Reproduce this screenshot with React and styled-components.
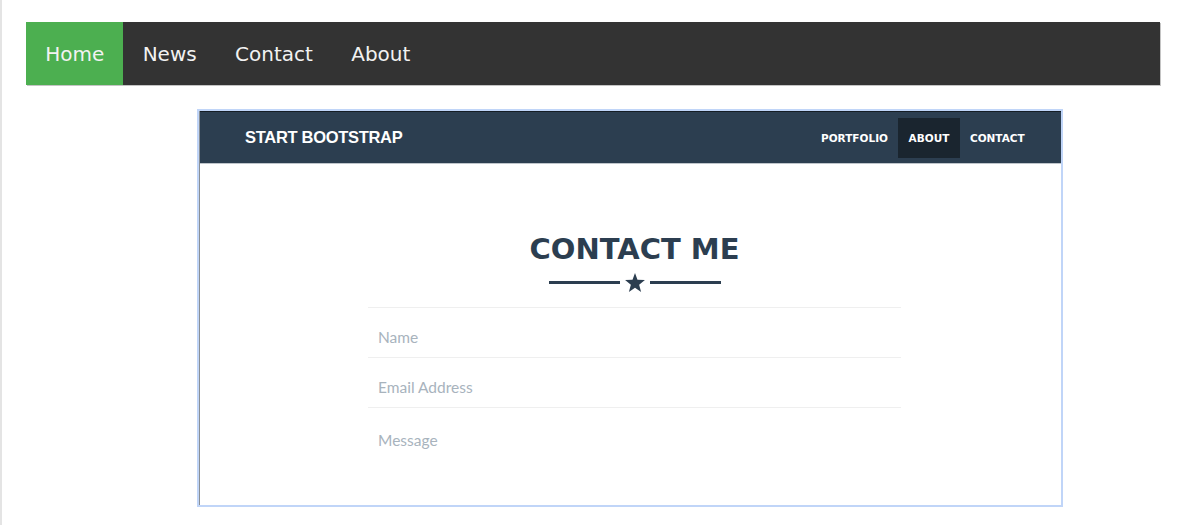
import React from "react";
import styled, { createGlobalStyle } from "styled-components";

const GlobalStyle = createGlobalStyle`
  html, body { margin: 0; padding: 0; background: #ffffff; }
  body { font-family: "DejaVu Sans", Verdana, sans-serif; }
  * { box-sizing: border-box; }
`;

const Page = styled.div`
  min-height: 525px;
  border-left: 2px solid #e4e4e4;
  padding-top: 22px;
`;

const TopNav = styled.nav`
  margin-left: 24px;
  width: 1134px;
  height: 63px;
  background: #333333;
  display: flex;
  box-shadow: 1px 1px 0 #c4c4c4;
`;

const TopLink = styled.a`
  display: flex;
  align-items: center;
  padding: 0 19.2px;
  font-family: "DejaVu Sans", Verdana, sans-serif;
  font-size: 20px;
  color: #f2f2f2;
  text-decoration: none;
  background: ${(p) => (p.$active ? "#4caf50" : "transparent")};
`;

const Frame = styled.div`
  margin: 24px 0 0 195px;
  width: 866px;
  height: 398px;
  border: 2px solid #c0d5f8;
`;

const Shot = styled.div`
  height: 100%;
  border-left: 1px solid #8a8f94;
  background: #ffffff;
  display: flex;
  flex-direction: column;
`;

const BsNav = styled.div`
  height: 53px;
  border-top: 1px solid #151d25;
  border-bottom: 1px solid #bfc5cb;
  background: #2c3e50;
  padding: 0 26px 0 45px;
  display: flex;
  align-items: center;
  justify-content: space-between;
`;

const Brand = styled.div`
  font-family: "Liberation Sans", Arial, sans-serif;
  font-weight: 700;
  font-size: 16.5px;
  letter-spacing: -0.3px;
  color: #ffffff;
`;

const BsLinks = styled.div`
  display: flex;
`;

const BsLink = styled.a`
  height: 40px;
  padding: 0 10.3px;
  display: flex;
  align-items: center;
  font-family: "DejaVu Sans", Verdana, sans-serif;
  font-weight: 700;
  font-size: 10.5px;
  color: #ffffff;
  text-decoration: none;
  background: ${(p) => (p.$active ? "#1a252f" : "transparent")};
`;

const Body = styled.div`
  flex: 1;
  display: flex;
  flex-direction: column;
  align-items: center;
  padding-left: 8px;
`;

const Title = styled.h2`
  margin: 71px 0 0;
  font-family: "DejaVu Sans", Verdana, sans-serif;
  font-weight: 700;
  font-size: 29px;
  line-height: 1;
  color: #2c3e50;
`;

const Divider = styled.div`
  margin-top: 9px;
  height: 19px;
  display: flex;
  align-items: center;
  gap: 5px;
`;

const Rule = styled.span`
  width: 71px;
  height: 3px;
  background: #2c3e50;
`;

const Form = styled.div`
  margin-top: 15px;
  width: 533px;
  display: flex;
  flex-direction: column;
`;

const Field = styled.div`
  border-top: 1px solid #efefef;
  padding: ${(p) => (p.$area ? "23px" : "20px")} 10px 11px;
  font-family: Lato, "Open Sans", sans-serif;
  font-size: 15.5px;
  line-height: 18px;
  color: #a8b3bd;
`;

const Star = () => (
  <svg width="20" height="19" viewBox="0 0 24 23" aria-hidden="true">
    <polygon
      points="12,0 15,8.3 24,8.6 17,14.2 19.4,23 12,18 4.6,23 7,14.2 0,8.6 9,8.3"
      fill="#2c3e50"
    />
  </svg>
);

export default function App() {
  return (
    <>
      <GlobalStyle />
      <Page>
        <TopNav>
          <TopLink $active href="#">Home</TopLink>
          <TopLink href="#">News</TopLink>
          <TopLink href="#">Contact</TopLink>
          <TopLink href="#">About</TopLink>
        </TopNav>
        <Frame>
          <Shot>
            <BsNav>
              <Brand>START BOOTSTRAP</Brand>
              <BsLinks>
                <BsLink href="#">PORTFOLIO</BsLink>
                <BsLink $active href="#">ABOUT</BsLink>
                <BsLink href="#">CONTACT</BsLink>
              </BsLinks>
            </BsNav>
            <Body>
              <Title>CONTACT ME</Title>
              <Divider>
                <Rule />
                <Star />
                <Rule />
              </Divider>
              <Form>
                <Field>Name</Field>
                <Field>Email Address</Field>
                <Field $area>Message</Field>
              </Form>
            </Body>
          </Shot>
        </Frame>
      </Page>
    </>
  );
}
